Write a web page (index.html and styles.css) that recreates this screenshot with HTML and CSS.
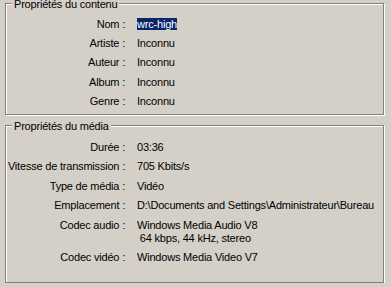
FILE: index.html
```html
<!DOCTYPE html>
<html lang="fr">
<head>
<meta charset="utf-8">
<title>Propriétés</title>
<link rel="stylesheet" href="styles.css">
</head>
<body>
<div class="page">
  <section class="group group-content">
    <span class="legend">Propriétés du contenu</span>
    <dl class="props">
      <dt>Nom :</dt><dd><span class="sel">wrc-high</span></dd>
      <dt>Artiste :</dt><dd>Inconnu</dd>
      <dt>Auteur :</dt><dd>Inconnu</dd>
      <dt>Album :</dt><dd>Inconnu</dd>
      <dt>Genre :</dt><dd>Inconnu</dd>
    </dl>
  </section>
  <section class="group group-media">
    <span class="legend">Propriétés du média</span>
    <dl class="props">
      <dt>Durée :</dt><dd>03:36</dd>
      <dt>Vitesse de transmission :</dt><dd>705 Kbits/s</dd>
      <dt>Type de média :</dt><dd>Vidéo</dd>
      <dt>Emplacement :</dt><dd>D:\Documents and Settings\Administrateur\Bureau</dd>
      <dt>Codec audio :</dt><dd>Windows Media Audio V8<br> 64 kbps, 44 kHz, stereo</dd>
      <dt>Codec vidéo :</dt><dd>Windows Media Video V7</dd>
    </dl>
  </section>
</div>
</body>
</html>
```

FILE: styles.css
```css
html, body {
  margin: 0;
  background: #d4d0c8;
}
body {
  font-family: "Liberation Sans", Arial, sans-serif;
  font-size: 11px;
  line-height: 13px;
  color: #000;
  letter-spacing: -0.2px;
}
.page {
  padding: 3px 7px 0 5px;
}
.group {
  position: relative;
  box-sizing: border-box;
  border: 1px solid #808080;
  box-shadow: 1px 1px 0 #fff, inset 1px 1px 0 #fff;
  padding-right: 7px;
}
.group-content {
  height: 112px;
  padding-top: 13.6px;
}
.group-media {
  height: 158px;
  margin-top: 10px;
  padding-top: 15px;
}
.legend {
  position: absolute;
  left: 6px;
  top: -6.4px;
  padding: 0 2px;
  background: #d4d0c8;
  white-space: nowrap;
}
.props {
  margin: 0;
  display: grid;
  grid-template-columns: 119px minmax(0, 1fr);
  column-gap: 12px;
  row-gap: 6.4px;
}
.props dt {
  text-align: right;
  white-space: nowrap;
}
.props dd {
  margin: 0;
  white-space: pre;
  overflow: hidden;
}
.sel {
  display: inline-block;
  background: #0a246a;
  color: #fff;
  height: 12px;
  vertical-align: top;
}
```
